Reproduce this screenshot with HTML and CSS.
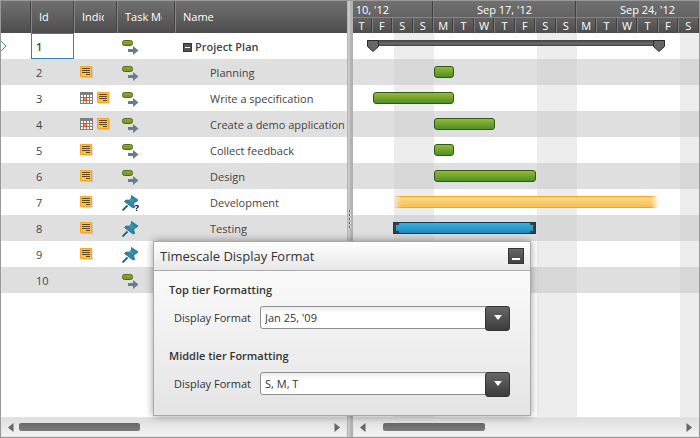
FILE: index.html
```html
<!DOCTYPE html>
<html lang="en">
<head>
<meta charset="utf-8">
<title>Project Plan</title>
<link rel="stylesheet" href="styles.css">
</head>
<body>
<svg class="defs" aria-hidden="true">
  <defs>
    <linearGradient id="pill" x1="0" y1="0" x2="0" y2="1"><stop offset="0" stop-color="#93ad2c"/><stop offset="1" stop-color="#6d9326"/></linearGradient>
    <symbol id="auto" viewBox="0 -1 17 16">
      <rect x="0.5" y="0.5" width="10" height="5" rx="2" fill="url(#pill)" stroke="#4f7012"/>
      <path d="M6 9h5V6l5.500 4.500L11 15v-3H6z" fill="#677d8c"/>
    </symbol>
    <symbol id="pin" viewBox="0 0 17 16">
      <path d="M0.500 15.500L5.500 10.500" stroke="#215f74" stroke-width="1.800" fill="none"/>
      <path d="M9.500.5L16 5l-1.500 1.500L12 7.500l-.3 1.700 1 3.300-1.700.5L2.500 6.500 4 5l3.500.2L9.300 3z" fill="#2f88a3" stroke="#226d86" stroke-width=".8"/>
      <path d="M8 6l2-2M9.500 7.500l2-2" stroke="#5aa9bf" stroke-width="1"/>
    </symbol>
    <symbol id="note" viewBox="0 0 13 12">
      <path d="M1 1h12v11H1z" fill="#000" opacity=".12"/>
      <path d="M.5.500h11v10H.5z" fill="#fbc04c" stroke="#f9a61f"/>
      <path d="M2 2.500h8M2 4.500h8M2 6.500h8M6 8.500h4" stroke="#5d4a22"/>
    </symbol>
    <symbol id="cal" viewBox="0 0 13 12">
      <path d="M0 0h13v12H0z" fill="#7f7f7f"/>
      <path d="M1 3h2v2H1zM4 3h2v2H4zM7 3h2v2H7zM10 3h2v2h-2zM1 6h2v2H1zM10 6h2v2h-2zM7 6h2v2H7zM1 9h2v2H1zM4 9h2v2H4zM7 9h2v2H7zM10 9h2v2h-2z" fill="#fff"/>
      <path d="M3.500 5.500h3v3h-3z" fill="#f89358" stroke="#d4500f"/>
    </symbol>
    <symbol id="left" viewBox="0 0 6 9"><path d="M5.500 0v9L0 4.500z" fill="#666"/></symbol>
    <symbol id="right" viewBox="0 0 6 9"><path d="M.5 0v9L6 4.500z" fill="#666"/></symbol>
  </defs>
</svg>
<main class="app">
  <section class="pane list">
    <div class="scroll">
      <table class="tasks">
        <colgroup><col class="c-mark"><col class="c-id"><col class="c-ind"><col class="c-mode"><col class="c-name"></colgroup>
        <thead>
          <tr><th></th><th><div class="clip">Id</div></th><th><div class="clip">Indicators</div></th><th><div class="clip">Task Mode</div></th><th><div class="clip">Name</div></th></tr>
        </thead>
        <tbody>
          <tr class="summary"><td class="mark"><svg width="6" height="12" viewBox="0 0 6 12"><path d="M0 1l5 5-5 5" fill="none" stroke="#2f8fbd"/></svg></td><td class="selected">1</td><td></td><td><svg class="mode"><use href="#auto"/></svg></td><td class="name"><button class="toggle" aria-label="Collapse"></button>Project Plan</td></tr>
          <tr><td></td><td>2</td><td class="icons"><svg class="ind"><use href="#note"/></svg></td><td><svg class="mode"><use href="#auto"/></svg></td><td class="name">Planning</td></tr>
          <tr><td></td><td>3</td><td class="icons"><svg class="ind"><use href="#cal"/></svg><svg class="ind"><use href="#note"/></svg></td><td><svg class="mode"><use href="#auto"/></svg></td><td class="name">Write a specification</td></tr>
          <tr><td></td><td>4</td><td class="icons"><svg class="ind"><use href="#cal"/></svg><svg class="ind"><use href="#note"/></svg></td><td><svg class="mode"><use href="#auto"/></svg></td><td class="name">Create a demo application</td></tr>
          <tr><td></td><td>5</td><td class="icons"><svg class="ind"><use href="#note"/></svg></td><td><svg class="mode"><use href="#auto"/></svg></td><td class="name">Collect feedback</td></tr>
          <tr><td></td><td>6</td><td class="icons"><svg class="ind"><use href="#note"/></svg></td><td><svg class="mode"><use href="#auto"/></svg></td><td class="name">Design</td></tr>
          <tr><td></td><td>7</td><td class="icons"><svg class="ind"><use href="#note"/></svg></td><td><span class="pin-wrap"><svg class="mode"><use href="#pin"/></svg><b class="query">?</b></span></td><td class="name">Development</td></tr>
          <tr><td></td><td>8</td><td class="icons"><svg class="ind"><use href="#note"/></svg></td><td><svg class="mode"><use href="#pin"/></svg></td><td class="name">Testing</td></tr>
          <tr><td></td><td>9</td><td class="icons"><svg class="ind"><use href="#note"/></svg></td><td><svg class="mode"><use href="#pin"/></svg></td><td></td></tr>
          <tr><td></td><td>10</td><td></td><td><svg class="mode"><use href="#auto"/></svg></td><td></td></tr>
        </tbody>
      </table>
    </div>
    <div class="hbar"><svg class="arrow"><use href="#left"/></svg><div class="track"><div class="thumb"></div></div><svg class="arrow"><use href="#right"/></svg></div>
  </section>
  <div class="splitter"><i></i><i></i><i></i><i></i><i></i></div>
  <section class="pane gantt">
    <div class="scale">
      <div class="week"><span class="title">Sep 10, '12</span><span>M</span><span>T</span><span>W</span><span>T</span><span>F</span><span>S</span><span>S</span></div>
      <div class="week"><span class="title">Sep 17, '12</span><span>M</span><span>T</span><span>W</span><span>T</span><span>F</span><span>S</span><span>S</span></div>
      <div class="week"><span class="title">Sep 24, '12</span><span>M</span><span>T</span><span>W</span><span>T</span><span>F</span><span>S</span><span>S</span></div>
    </div>
    <div class="chart">
      <div class="line"><div class="bar total" style="grid-column:5/19"><svg class="cap" viewBox="0 0 12 12"><path d="M.5.500h11v6L6 11.500.5 6.500z"/></svg><svg class="cap" viewBox="0 0 12 12"><path d="M.5.500h11v6L6 11.500.5 6.500z"/></svg></div></div>
      <div class="line"><div class="bar" style="grid-column:8/9"></div></div>
      <div class="line"><div class="bar" style="grid-column:5/9"></div></div>
      <div class="line"><div class="bar" style="grid-column:8/11"></div></div>
      <div class="line"><div class="bar" style="grid-column:8/9"></div></div>
      <div class="line"><div class="bar" style="grid-column:8/13"></div></div>
      <div class="line"><div class="bar open" style="grid-column:6/19"></div></div>
      <div class="line"><div class="bar manual" style="grid-column:6/13"><i></i><i></i></div></div>
      <div class="line"></div>
      <div class="line"></div>
    </div>
    <div class="hbar"><svg class="arrow"><use href="#left"/></svg><div class="track"><div class="thumb"></div></div><svg class="arrow"><use href="#right"/></svg></div>
  </section>
  <form class="dialog">
    <header class="dialog-head"><h2>Timescale Display Format</h2><button type="button" class="minimize" aria-label="Minimize"></button></header>
    <div class="dialog-body">
      <fieldset>
        <legend>Top tier Formatting</legend>
        <div class="field"><label for="top">Display Format</label><span class="combo"><select id="top"><option>Jan 25, '09</option></select></span></div>
      </fieldset>
      <fieldset>
        <legend>Middle tier Formatting</legend>
        <div class="field"><label for="middle">Display Format</label><span class="combo"><select id="middle"><option>S, M, T</option></select></span></div>
      </fieldset>
    </div>
  </form>
</main>
</body>
</html>
```
FILE: styles.css
```css
* { box-sizing: border-box; }
body { margin: 0; font: 11px/16px "Open Sans", "Noto Sans", sans-serif; color: #444; }
.defs { position: absolute; width: 0; height: 0; }
.app { position: relative; display: flex; height: 100vh; border: 1px solid #999; background: #fff; overflow: hidden; }
.pane { display: flex; flex-direction: column; min-width: 0; overflow: hidden; }
.list { flex: 0 0 346px; }
.gantt { flex: 1; }
.scroll { flex: 1; min-height: 0; overflow: hidden; }

.tasks { width: 100%; table-layout: fixed; border-collapse: separate; border-spacing: 0; }
.c-mark { width: 30px; }
.c-id, .c-ind { width: 43px; }
.c-mode { width: 58px; }
th { height: 32px; padding: 0 12px 0 7px; text-align: left; font-weight: 400; color: #fff; background: linear-gradient(#707070, #4d4d4d); border-left: 1px solid #858585; border-right: 1px solid #444; }
th:first-child { border-left: 0; }
th:last-child { border-right: 0; }
.clip { overflow: hidden; white-space: nowrap; }
td { height: 26px; padding: 1px 0 0 5px; vertical-align: middle; white-space: nowrap; }
tbody tr:nth-child(even) { background: #dfdfdf; }
td svg { display: block; }
td.mark { padding: 0; }
td.selected { border: 1px solid #2e86b0; padding: 1px 0 0 4px; }
td.icons { padding: 0 0 0 6px; }
td.icons svg { float: left; }
td.name { padding-left: 35px; }
.summary { font-weight: 600; }
.summary td.name { padding-left: 8px; }
.toggle { width: 9px; height: 9px; margin: 0 3px 0 0; padding: 0; border: 1px solid #333; background: linear-gradient(#fff, #fff) center / 5px 1px no-repeat, #555; }
.ind { width: 13px; height: 12px; margin-right: 4px; }
.mode { width: 17px; height: 16px; }
.pin-wrap { position: relative; display: block; width: 17px; }
.query { position: absolute; right: 0; bottom: -2px; font: 700 9px/10px "Open Sans", sans-serif; color: #000; }

.splitter { flex: 0 0 6px; display: flex; flex-direction: column; align-items: center; justify-content: center; gap: 2px; background: linear-gradient(90deg, #a5a5a5, #cbcbcb 20%, #c4c4c4 50%, #b2b2b2 60%, #b2b2b2); }
.splitter i { width: 2px; height: 2px; background: #555; border-right: 1px solid #eee; }

.scale { display: flex; flex: 0 0 32px; margin-left: -63px; color: #fff; }
.week { flex: 0 0 143px; display: grid; grid-template: 17px 15px / repeat(7, 1fr); text-align: center; line-height: 15px; }
.week span { background: linear-gradient(#636363, #4d4d4d); border-left: 1px solid #7c7c7c; border-right: 1px solid #3f3f3f; }
.week .title { grid-column: 1 / -1; line-height: 18px; background: linear-gradient(#707070, #636363); border-bottom: 1px solid #858585; }
.chart { flex: 1; min-height: 0; overflow: hidden; position: relative; background: repeating-linear-gradient(90deg, transparent 0 103px, #ededed 103px 143px) -62px 0 / 1430px 100% repeat-x; }
.line { height: 26px; padding: 7px 0; margin-left: -62px; display: grid; grid-template-columns: repeat(21, calc(143px / 7)); }
.line:nth-child(even) { background: repeating-linear-gradient(90deg, #dfdfdf 0 103px, #d8d8d8 103px 143px); }
.bar { height: 12px; border: 1px solid #2c5a18; border-radius: 3px; background: linear-gradient(#9cb82f, #4b8f2c); }
.total { display: flex; justify-content: space-between; height: 6px; margin: 0 -6px; border: 0; border-radius: 0; background: linear-gradient(#3f3f3f, #6c6c6c 60%, #404040); }
.cap { width: 12px; height: 12px; fill: #666; stroke: #2b2b30; }
.open { border: 0; border-radius: 0; background: linear-gradient(#f5a623 1px, #ffdb8b 1px, #f5bf52 11px, #f5a623 11px); -webkit-mask: linear-gradient(90deg, transparent, #000 8px calc(100% - 8px), transparent); mask: linear-gradient(90deg, transparent, #000 8px calc(100% - 8px), transparent); }
.manual { display: flex; justify-content: space-between; border-color: #103f55; border-radius: 0; background: linear-gradient(#36b1e4, #2686b6); }
.manual i { width: 5px; border: 2px solid #3a3f42; border-right: 0; }
.manual i:last-child { transform: scaleX(-1); }

.hbar { flex: 0 0 20px; display: flex; align-items: center; gap: 5px; padding: 0 6px; background: linear-gradient(#dedede, #f3f3f3); border: 1px solid #e4e4e4; }
.arrow { width: 6px; height: 9px; flex: none; }
.track { flex: 1; }
.thumb { width: 39%; height: 8px; border-radius: 2px; background: linear-gradient(#686868, #7c7c7c); }
.gantt .thumb { width: 33%; margin-left: 12px; }

.dialog { position: absolute; left: 152px; top: 240px; width: 378px; border: 1px solid #a9a9a9; background: linear-gradient(#fff, #e4e4e4); box-shadow: 0 0 8px rgba(0, 0, 0, .4); color: #333; }
.dialog-head { display: flex; align-items: center; justify-content: space-between; height: 29px; padding: 0 6px; background: linear-gradient(#fff, #e7e7e7); border-bottom: 1px solid #a9a9a9; }
h2 { margin: 0; font-size: 13px; font-weight: 400; line-height: 20px; }
.minimize { width: 16px; height: 16px; padding: 0; border: 1px solid #333; background: linear-gradient(#fff, #fff) 3px 9px / 8px 2px no-repeat, linear-gradient(#666, #444); }
.dialog-body { display: grid; gap: 17px; padding: 9px 20px 20px 15px; }
fieldset { margin: 0; padding: 0; border: 0; min-width: 0; }
legend { padding: 0; margin-bottom: 6px; line-height: 20px; font-weight: 600; }
.field { display: grid; grid-template-columns: 86px 1fr; align-items: center; padding-left: 5px; }
.combo { position: relative; display: block; }
.combo::before { content: ""; position: absolute; right: 0; top: 0; width: 23px; height: 23px; border: 1px solid #333; border-radius: 3px; background: linear-gradient(#666, #3c3c3c); pointer-events: none; }
.combo::after { content: ""; position: absolute; right: 8px; top: 9px; border: 4px solid transparent; border-top: 5px solid #fff; border-bottom: 0; pointer-events: none; }
select { display: block; width: 100%; height: 23px; padding: 0 24px 0 4px; border: 1px solid #8f8f8f; border-radius: 3px; appearance: none; background: linear-gradient(#ececec, #fff 6px); font: inherit; color: #333; }
```
